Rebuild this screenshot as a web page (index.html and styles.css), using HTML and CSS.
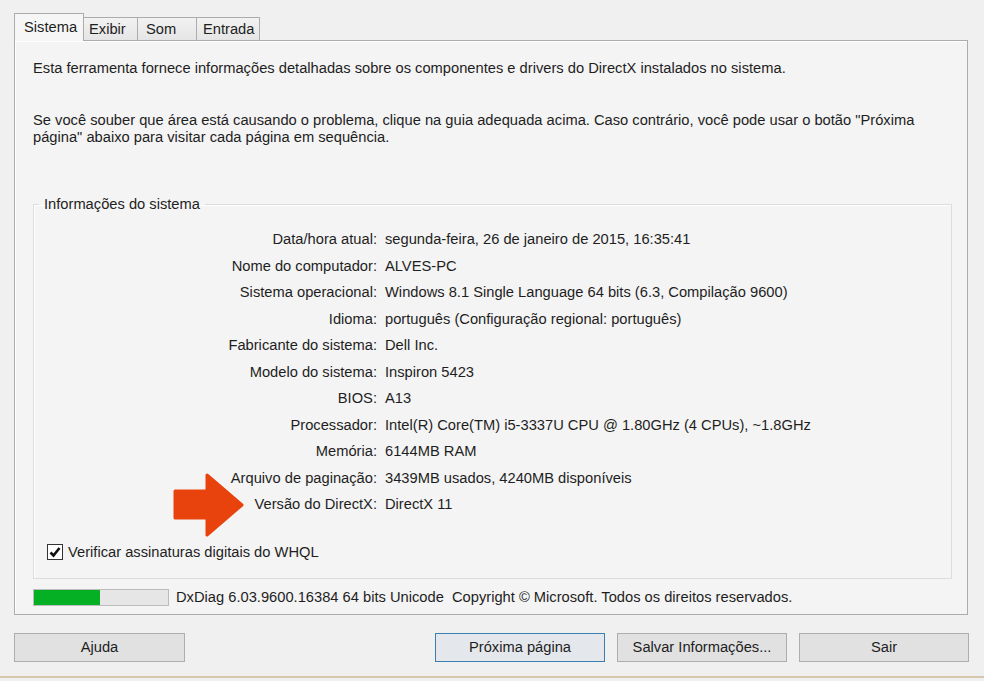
FILE: index.html
```html
<!DOCTYPE html>
<html lang="pt">
<head>
    <meta charset="UTF-8">
    <title>Ferramenta de Diagnóstico do DirectX</title>
    <link rel="stylesheet" href="styles.css">
</head>
<body>
    <div class="window">
        <div class="tabs">
            <div class="tab active">Sistema</div>
            <div class="tab exibir">Exibir</div>
            <div class="tab som">Som</div>
            <div class="tab entrada">Entrada</div>
        </div>

        <div class="panel">
            <p class="intro">Esta ferramenta fornece informações detalhadas sobre os componentes e drivers do DirectX instalados no sistema.</p>
            <p class="hint">Se você souber que área está causando o problema, clique na guia adequada acima. Caso contrário, você pode usar o botão "Próxima página" abaixo para visitar cada página em sequência.</p>

            <fieldset class="group">
                <legend>Informações do sistema</legend>
                <div class="info">
                    <span class="label">Data/hora atual:</span><span>segunda-feira, 26 de janeiro de 2015, 16:35:41</span>
                    <span class="label">Nome do computador:</span><span>ALVES-PC</span>
                    <span class="label">Sistema operacional:</span><span>Windows 8.1 Single Language 64 bits (6.3, Compilação 9600)</span>
                    <span class="label">Idioma:</span><span>português (Configuração regional: português)</span>
                    <span class="label">Fabricante do sistema:</span><span>Dell Inc.</span>
                    <span class="label">Modelo do sistema:</span><span>Inspiron 5423</span>
                    <span class="label">BIOS:</span><span>A13</span>
                    <span class="label">Processador:</span><span>Intel(R) Core(TM) i5-3337U CPU @ 1.80GHz (4 CPUs), ~1.8GHz</span>
                    <span class="label">Memória:</span><span>6144MB RAM</span>
                    <span class="label">Arquivo de paginação:</span><span>3439MB usados, 4240MB disponíveis</span>
                    <span class="label">Versão do DirectX:</span><span>DirectX 11</span>
                </div>
                <svg class="arrow" width="74" height="66" viewBox="0 0 74 66">
                    <polygon points="3,19 35,19 35,3 70,33 35,63 35,46 3,46" fill="#e8430c" stroke="#e8430c" stroke-width="3" stroke-linejoin="round"/>
                </svg>
                <label class="check">
                    <span class="box">
                        <svg width="12" height="12" viewBox="0 0 12 12"><path d="M1.5 6.5 L4.5 9.5 L10.5 2" fill="none" stroke="#111" stroke-width="2.6"/></svg>
                    </span>
                    Verificar assinaturas digitais do WHQL
                </label>
            </fieldset>

            <div class="status">
                <div class="progress"><div class="fill" style="width: 49%"></div></div>
                <span>DxDiag 6.03.9600.16384 64 bits Unicode&nbsp; Copyright © Microsoft. Todos os direitos reservados.</span>
            </div>
        </div>

        <div class="buttons">
            <button class="btn help">Ajuda</button>
            <button class="btn default">Próxima página</button>
            <button class="btn">Salvar Informações...</button>
            <button class="btn">Sair</button>
        </div>
    </div>
</body>
</html>
```

FILE: styles.css
```css
body {
    margin: 0;
    padding: 0;
    background-color: #f0f0f0;
    font-family: "Liberation Sans", Arial, sans-serif;
    font-size: 14.7px;
    color: #1e1e1e;
}

.window {
    width: 984px;
    height: 678px;
    box-sizing: border-box;
    padding: 14px 15px 0 14px;
    border-bottom: 2px solid #d6c8ac;
}

.tabs {
    display: flex;
    align-items: flex-end;
    height: 26px;
}

.tab {
    height: 23px;
    line-height: 22px;
    box-sizing: border-box;
    border: 1px solid #acacac;
    border-bottom: none;
    border-left: none;
    background: linear-gradient(#f2f2f2, #e5e5e5);
}

.tab.exibir {
    width: 54px;
    padding-left: 5px;
}

.tab.som {
    width: 59px;
    padding-left: 8px;
}

.tab.entrada {
    width: 63px;
    padding-left: 6px;
}

.tab.active {
    height: 28px;
    line-height: 26px;
    margin-bottom: -1px;
    padding-left: 9px;
    width: 70px;
    border-left: 1px solid #acacac;
    background: #f6f6f6;
    position: relative;
    z-index: 1;
}

.panel {
    border: 1px solid #acacac;
    box-shadow: inset 1px 1px 0 #fff;
    background-color: #f4f4f4;
    padding: 19px 15px 8px 18px;
    width: 954px;
    box-sizing: border-box;
}

.panel p {
    margin: 0;
    line-height: 17px;
}

.hint {
    margin-top: 35px !important;
    padding-right: 20px;
}

.group {
    position: relative;
    margin: 50px 0 0 0;
    padding: 13px 0 17px 0;
    border: 1px solid #dcdcdc;
    box-shadow: inset 1px 1px 0 #fff;
}

.group legend {
    margin-left: 5px;
    padding: 0 5px;
    line-height: 17px;
}

.info {
    display: grid;
    grid-template-columns: 343px 1fr;
    column-gap: 8px;
    grid-auto-rows: 26.5px;
    align-items: center;
}

.label {
    text-align: right;
}

.arrow {
    position: absolute;
    left: 138px;
    top: 259px;
}

.check {
    display: flex;
    align-items: center;
    gap: 5px;
    margin: 26px 0 0 13px;
    line-height: 17px;
}

.check .box {
    width: 14px;
    height: 14px;
    border: 1px solid #333;
    background: #fff;
    display: flex;
    align-items: center;
    justify-content: center;
}

.status {
    display: flex;
    align-items: center;
    gap: 7px;
    margin-top: 10px;
}

.progress {
    width: 134px;
    height: 15px;
    border: 1px solid #bcbcbc;
    background: #e6e6e6;
}

.progress .fill {
    height: 100%;
    background: #06b025;
}

.buttons {
    display: flex;
    gap: 12px;
    margin-top: 18px;
}

.btn {
    width: 170px;
    height: 29px;
    border: 1px solid #adadad;
    background: #e1e1e1;
    font-family: "Liberation Sans", Arial, sans-serif;
    font-size: 14.7px;
    color: #1e1e1e;
    padding: 0;
}

.btn.help {
    width: 171px;
    margin-right: auto;
}

.btn.default {
    border-color: #3c7fb1;
    background: #e4e8ec;
}
```
